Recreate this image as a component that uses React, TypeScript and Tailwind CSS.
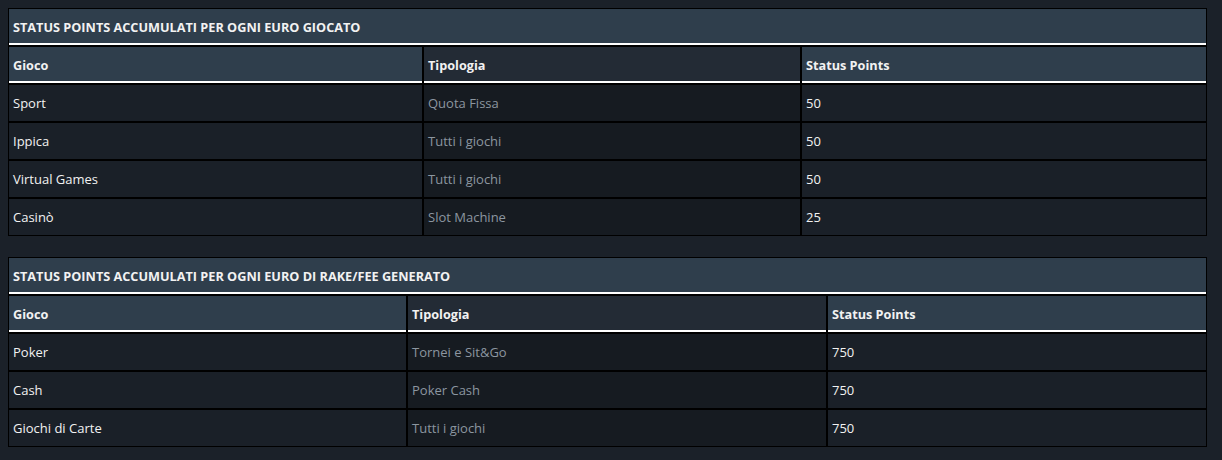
const tables = [
  {
    title: 'STATUS POINTS ACCUMULATI PER OGNI EURO GIOCATO',
    widths: ['w-[415px]', 'w-[378px]', 'w-[406px]'],
    rows: [
      ['Sport', 'Quota Fissa', '50'],
      ['Ippica', 'Tutti i giochi', '50'],
      ['Virtual Games', 'Tutti i giochi', '50'],
      ['Casinò', 'Slot Machine', '25'],
    ],
  },
  {
    title: 'STATUS POINTS ACCUMULATI PER OGNI EURO DI RAKE/FEE GENERATO',
    widths: ['w-[399px]', 'w-[420px]', 'w-[380px]'],
    rows: [
      ['Poker', 'Tornei e Sit&Go', '750'],
      ['Cash', 'Poker Cash', '750'],
      ['Giochi di Carte', 'Tutti i giochi', '750'],
    ],
  },
];

const headers = ['Gioco', 'Tipologia', 'Status Points'];

export default function App() {
  return (
    <div
      className="min-h-[460px] bg-[#1b2129] pl-2 pt-2 text-[13px] text-[#f2f2f2]"
      style={{ fontFamily: '"Open Sans", Arial, sans-serif' }}
    >
      {tables.map((t, ti) => (
        <table
          key={ti}
          className={`w-[1199px] table-fixed border-separate border-spacing-0 ${ti === 0 ? 'mb-[21px]' : ''}`}
        >
          <colgroup>
            {t.widths.map((w, i) => (
              <col key={i} className={w} />
            ))}
          </colgroup>
          <thead>
            <tr>
              <th
                colSpan={3}
                className="h-[38px] border border-black bg-[#2f3e4c] px-1 pt-[2px] pb-0 text-left text-[12.7px] font-bold shadow-[inset_0_-2px_0_#ffffff]"
              >
                {t.title}
              </th>
            </tr>
            <tr>
              {headers.map((h, i) => (
                <th
                  key={h}
                  className={`h-[38px] border border-black px-1 pt-[2px] pb-0 text-left text-[12.7px] font-bold shadow-[inset_0_-2px_0_#ffffff] ${
                    i === 1 ? 'bg-[#232b35]' : 'bg-[#2f3e4c]'
                  }`}
                >
                  {h}
                </th>
              ))}
            </tr>
          </thead>
          <tbody>
            {t.rows.map((r, ri) => (
              <tr key={ri}>
                {r.map((c, ci) => (
                  <td
                    key={ci}
                    className={`h-[38px] border border-black px-1 pt-[2px] pb-0 ${
                      ci === 1 ? 'bg-[#161b21] text-[#8c96a0]' : 'bg-[#1a2028]'
                    }`}
                  >
                    {c}
                  </td>
                ))}
              </tr>
            ))}
          </tbody>
        </table>
      ))}
    </div>
  );
}
